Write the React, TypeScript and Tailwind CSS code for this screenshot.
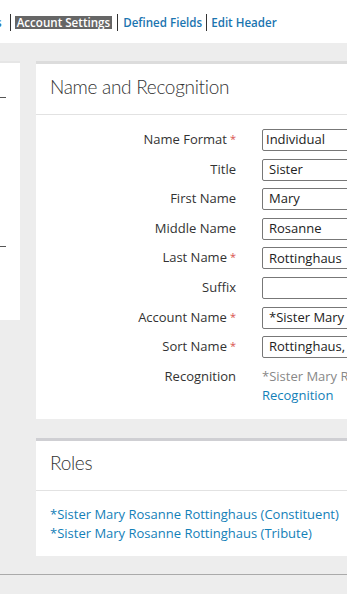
import React from "react";

const rows: { label: string; value: string; required?: boolean; select?: boolean }[] = [
  { label: "Name Format", value: "Individual", required: true, select: true },
  { label: "Title", value: "Sister" },
  { label: "First Name", value: "Mary" },
  { label: "Middle Name", value: "Rosanne" },
  { label: "Last Name", value: "Rottinghaus", required: true },
  { label: "Suffix", value: "" },
  { label: "Account Name", value: "*Sister Mary Rosanne Rottinghaus", required: true },
  { label: "Sort Name", value: "Rottinghaus, Mary Rosanne", required: true },
];

export default function App() {
  return (
    <div
      className="w-[347px] h-[594px] overflow-hidden bg-[#ededed] text-[#333]"
      style={{ fontFamily: '"Open Sans", "Noto Sans", sans-serif' }}
    >
      {/* TAB NAV */}
      <nav className="h-[43px] bg-white flex items-start pt-[14px] text-[11.6px] font-semibold whitespace-nowrap">
        <span className="text-[#1b75b0] -ml-[4px] pr-[4px] leading-[17px]">s</span>
        <span className="h-[17px] border-l border-[#333] mx-[4px]"></span>
        <span className="bg-[#666] text-white px-[2px] leading-[13px] h-[13px] mt-[2px]">Account Settings</span>
        <span className="h-[17px] border-l border-[#333] mx-[5px]"></span>
        <span className="text-[#1b75b0] leading-[17px]">Defined Fields</span>
        <span className="h-[17px] border-l border-[#333] mx-[4px]"></span>
        <span className="text-[#1b75b0] leading-[17px]">Edit Header</span>
      </nav>

      <div className="flex gap-[16px] pt-[18px] w-[700px]">
        {/* LEFT PANEL (clipped) */}
        <div className="w-[20px] h-[259px] shrink-0 bg-white border-t-2 border-[#e6e6e6]">
          <div className="w-[6px] border-b border-[#555] mt-[34px]"></div>
          <div className="w-[6px] border-b border-[#555] mt-[148px]"></div>
        </div>

        <div className="w-[560px] shrink-0 flex flex-col">
          {/* NAME AND RECOGNITION */}
          <section className="bg-white border-t-[3px] border-[#dcdcdc]">
            <h2
              className="h-[51px] flex items-center px-[14px] pb-[3px] text-[19px] tracking-[-0.3px] font-light text-[#333] border-b border-[#e2e2e2]"
              style={{ fontFamily: 'Lato, "Open Sans", sans-serif' }}
            >
              Name and Recognition
            </h2>
            <div className="pt-[14px] pb-[14px] flex flex-col gap-[7.6px] text-[13px]">
              {rows.map((r) => (
                <div key={r.label} className="flex items-start">
                  <div className="w-[200px] shrink-0 text-right pt-[1px] leading-[18px]">
                    {r.label}
                    {r.required && <span className="text-[#d9534f] text-[11px] align-top ml-[3px]">*</span>}
                  </div>
                  <div
                    className={`ml-[26px] w-[200px] h-[22px] border border-[#777] rounded-[2px] flex items-center text-[13px] text-[#222] whitespace-nowrap overflow-hidden ${
                      r.select ? "pl-[3px]" : "pl-[6px]"
                    }`}
                  >
                    {r.value}
                  </div>
                </div>
              ))}
              <div className="flex items-start mt-[1px]">
                <div className="w-[200px] shrink-0 text-right leading-[19px]">Recognition</div>
                <div className="ml-[26px] leading-[19px]">
                  <div className="text-[#888] whitespace-nowrap">*Sister Mary Rosanne Rottinghaus</div>
                  <div className="text-[#1380b8]">Recognition</div>
                </div>
              </div>
            </div>
          </section>

          {/* ROLES */}
          <section className="mt-[19px] bg-white border-t-[3px] border-[#cfcfd3]">
            <h2
              className="h-[50px] flex items-center px-[14px] pb-[4px] text-[19px] tracking-[-0.3px] font-light text-[#333] border-b border-[#e2e2e2]"
              style={{ fontFamily: 'Lato, "Open Sans", sans-serif' }}
            >
              Roles
            </h2>
            <div className="px-[14px] pt-[14px] pb-[13px] text-[13px] leading-[19px] text-[#1380b8]">
              <div>*Sister Mary Rosanne Rottinghaus (Constituent)</div>
              <div>*Sister Mary Rosanne Rottinghaus (Tribute)</div>
            </div>
          </section>
        </div>
      </div>

      <div className="mt-[18px] border-t border-[#aaa]"></div>
    </div>
  );
}
